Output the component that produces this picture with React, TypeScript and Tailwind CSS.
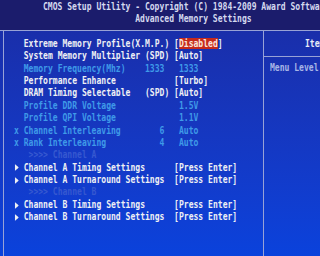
import React from 'react';

type Seg = { t: string; c: string };
type Row = { mark?: 'x' | 'arrow'; segs: Seg[] };

// bios palette
const W = 'text-[#eef0f4]';
const D = 'text-[#3f9ae8]';
const F = 'text-[#3658d0]';
const HL = 'bg-[#c62a1c] text-[#fbe6dc]';

const rows: Row[] = [
    { segs: [{ t: 'Extreme Memory Profile(X.M.P.) [', c: W }, { t: 'Disabled', c: HL }, { t: ']', c: W }] },
    { segs: [{ t: 'System Memory Multiplier (SPD) [Auto]', c: W }] },
    { segs: [{ t: 'Memory Frequency(Mhz)    1333   1333', c: D }] },
    { segs: [{ t: 'Performance Enhance            [Turbo]', c: W }] },
    { segs: [{ t: 'DRAM Timing Selectable   (SPD) [Auto]', c: W }] },
    { segs: [{ t: 'Profile DDR Voltage             1.5V', c: D }] },
    { segs: [{ t: 'Profile QPI Voltage             1.1V', c: D }] },
    { mark: 'x', segs: [{ t: 'Channel Interleaving        6   Auto', c: D }] },
    { mark: 'x', segs: [{ t: 'Rank Interleaving           4   Auto', c: D }] },
    { segs: [{ t: ' >>>> Channel A', c: F }] },
    { mark: 'arrow', segs: [{ t: 'Channel A Timing Settings      [Press Enter]', c: W }] },
    { mark: 'arrow', segs: [{ t: 'Channel A Turnaround Settings  [Press Enter]', c: W }] },
    { segs: [{ t: ' >>>> Channel B', c: F }] },
    { mark: 'arrow', segs: [{ t: 'Channel B Timing Settings      [Press Enter]', c: W }] },
    { mark: 'arrow', segs: [{ t: 'Channel B Turnaround Settings  [Press Enter]', c: W }] },
];

const Marker = ({ mark }: { mark?: Row['mark'] }) => {
    if (mark === 'x') return <span className={`w-[12px] shrink-0 ${D}`}>x</span>;
    if (mark === 'arrow')
        return (
            <span className="w-[12px] shrink-0 flex items-center">
                <svg width="5" height="7" viewBox="0 0 5 7" className="ml-[1px]">
                    <path d="M0 0 L5 3.5 L0 7 Z" fill="#eef0f4" />
                </svg>
            </span>
        );
    return <span className="w-[12px] shrink-0" />;
};

export default function App() {
    return (
        <div className="w-[320px] h-[256px] overflow-hidden flex flex-col bg-linear-to-b from-[#1a2ca4] to-[#0a42dc] font-['DejaVu_Sans_Mono',monospace] font-bold text-[10px] leading-[12.4px]">
            {/* title bar */}
            <div className="h-[30px] shrink-0 bg-[#1b1c6c] text-[#d4d8ee] pt-[0.5px] pl-[42.7px]">
                <div className="origin-left scale-x-[0.806] whitespace-pre">
                    <div className="h-[12.4px]">CMOS Setup Utility - Copyright (C) 1984-2009 Award Software</div>
                    <div className="h-[12.4px]">{'                   Advanced Memory Settings'}</div>
                </div>
            </div>

            {/* frame */}
            <div className="flex flex-1 border-t border-[#98a2d6] pl-[3px]">
                <div className="w-[260px] shrink-0 border-l border-[#98a2d6] pt-[6.8px] pl-[9.6px]">
                    <div className="origin-left scale-x-[0.806] whitespace-pre">
                        {rows.map((r, i) => (
                            <div key={i} className="flex h-[12.4px] items-center">
                                <Marker mark={r.mark} />
                                <span>
                                    {r.segs.map((s, j) => (
                                        <span key={j} className={s.c}>{s.t}</span>
                                    ))}
                                </span>
                            </div>
                        ))}
                    </div>
                </div>

                <div className="flex-1 border-l border-[#98a2d6] flex flex-col">
                    <div className="h-[26px] shrink-0 border-b border-[#98a2d6] pt-[6.8px] pl-[41px] text-[#e8ecf6]">
                        <div className="origin-left scale-x-[0.806] whitespace-pre h-[12.4px]">Item Help</div>
                    </div>
                    <div className="pt-[5px] pl-[6px] text-[#a8b6e6]">
                        <div className="origin-left scale-x-[0.806] whitespace-pre h-[12.4px]">Menu Level</div>
                    </div>
                </div>
            </div>
        </div>
    );
}
